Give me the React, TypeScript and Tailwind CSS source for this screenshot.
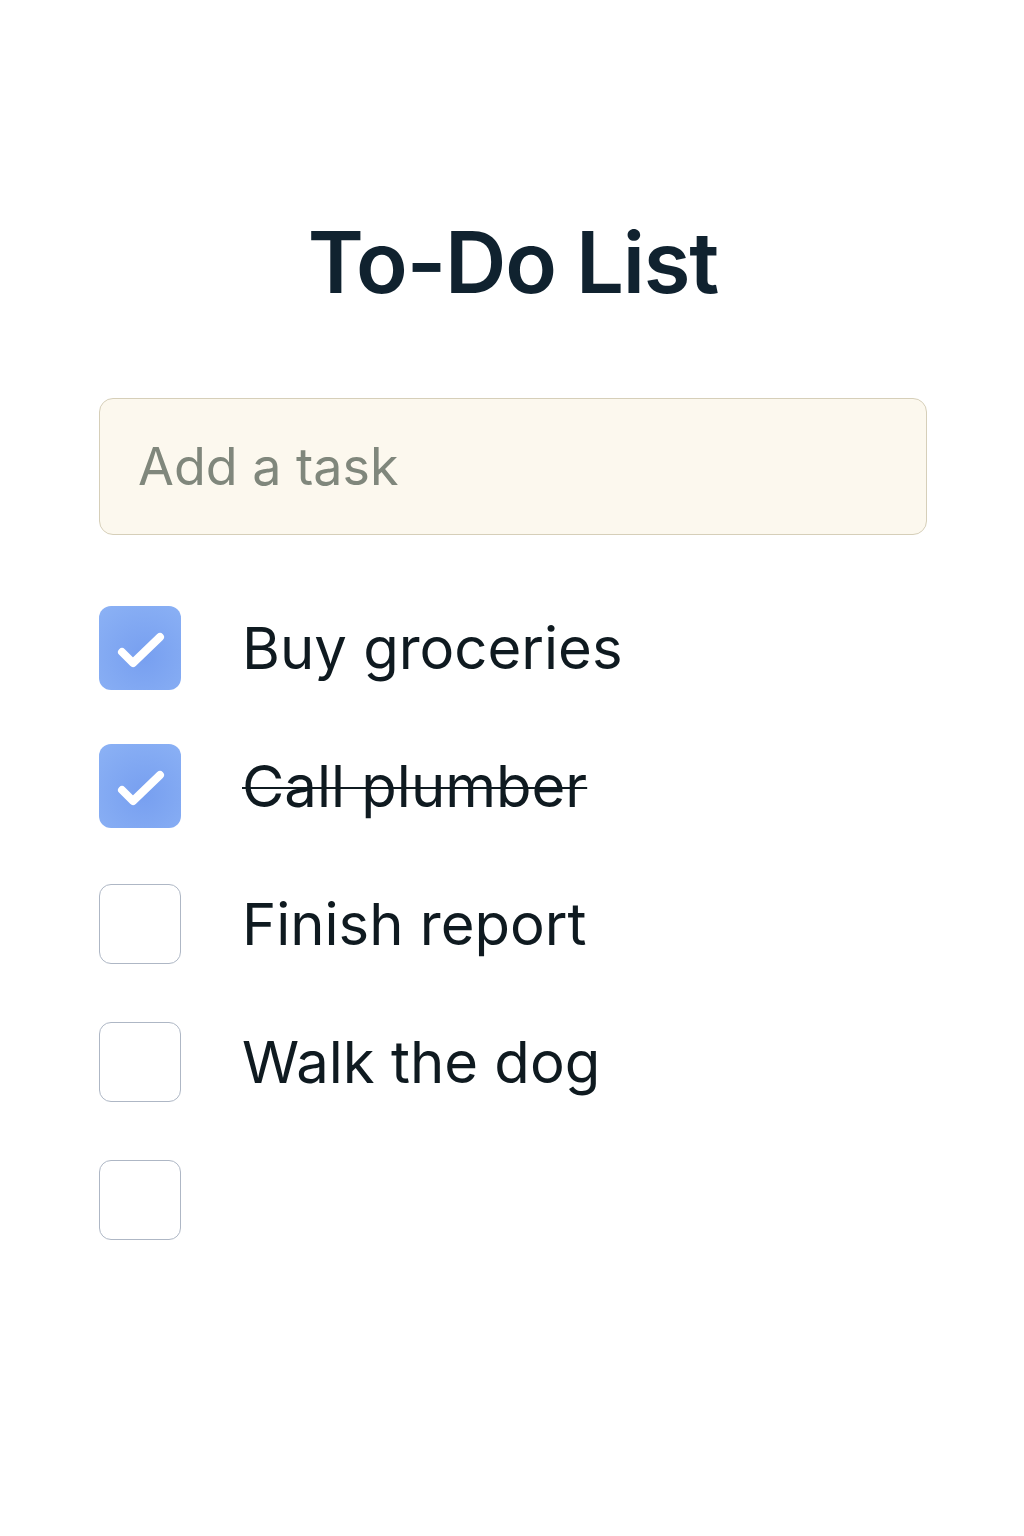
import React from "react";

const items = [
  { text: "Buy groceries", checked: true, strike: false },
  { text: "Call plumber", checked: true, strike: true },
  { text: "Finish report", checked: false, strike: false },
  { text: "Walk the dog", checked: false, strike: false },
  { text: "", checked: false, strike: false },
];

function Box({ checked }: { checked: boolean }) {
  if (checked) {
    return (
      <div className="w-[82px] h-[84px] shrink-0 rounded-[12px] bg-[radial-gradient(circle_at_55%_60%,#779ff0,#8cb2f5)] flex items-center justify-center">
        <svg width="82" height="84" viewBox="0 0 82 84" fill="none">
          <path d="M23 46 L34 57 L61 31" stroke="white" strokeWidth="8" strokeLinecap="round" strokeLinejoin="round" />
        </svg>
      </div>
    );
  }
  return <div className="w-[82px] h-[80px] shrink-0 rounded-[12px] border border-[#aeb7c5] bg-white" />;
}

export default function App() {
  return (
    <div className="w-[1024px] h-[1536px] bg-white" style={{ fontFamily: "Inter, 'Noto Sans', sans-serif" }}>
      <div className="pt-[210px] flex flex-col items-center">
        <h1 className="text-[85px] leading-[106px] font-semibold text-[#10222f] tracking-[-1.2px] pl-[2px]">To-Do List</h1>
      </div>
      <div className="pl-[99px] mt-[82px]">
        <div className="w-[828px] h-[137px] rounded-[14px] border border-[#d6cfb9] bg-[#fcf8ee] flex items-center pl-[38px]">
          <span className="text-[52px] text-[#80877c]">Add a task</span>
        </div>
        <div className="mt-[71px] flex flex-col gap-[54px]">
          {items.map((it, i) => (
            <div key={i} className="flex items-center h-[84px]">
              <Box checked={it.checked} />
              <span className={"ml-[61px] text-[58px] leading-[84px] text-[#0f1a20] " + (it.strike ? "line-through decoration-[2px]" : "")}>{it.text}</span>
            </div>
          ))}
        </div>
      </div>
    </div>
  );
}
